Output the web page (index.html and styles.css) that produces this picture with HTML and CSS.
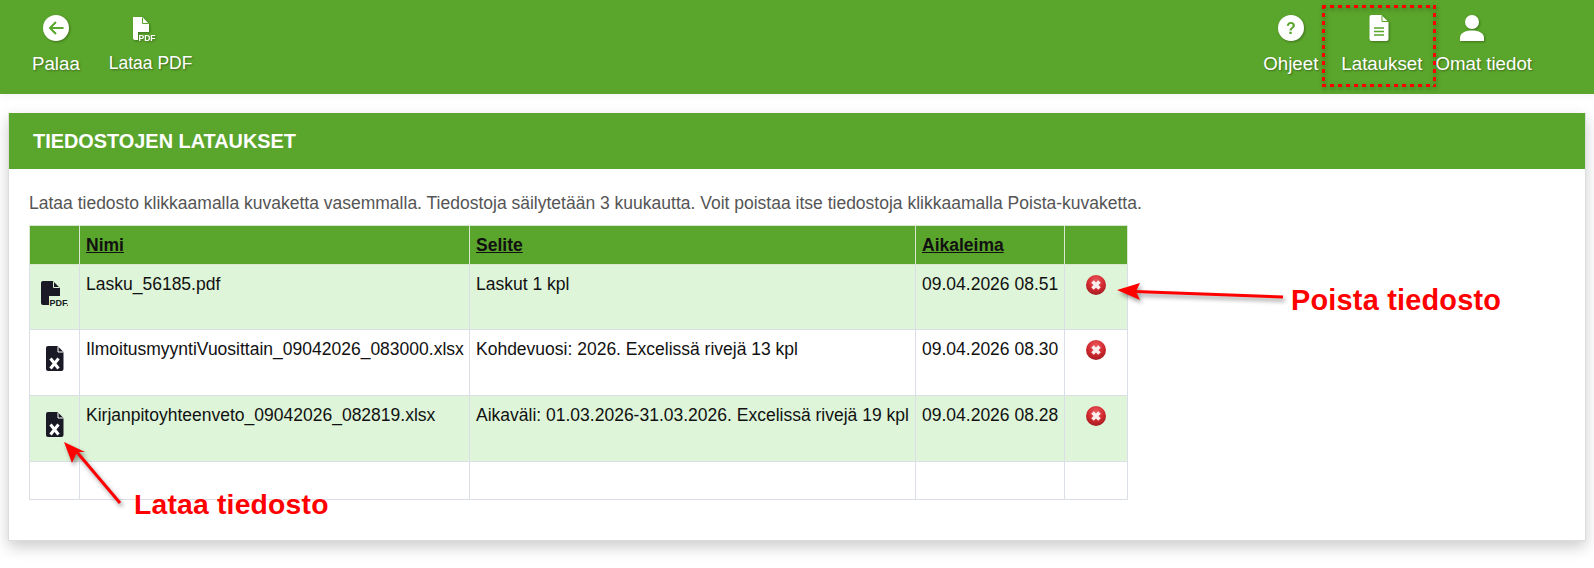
FILE: index.html
```html
<!DOCTYPE html>
<html lang="fi">
<head>
<meta charset="utf-8">
<title>Tiedostojen lataukset</title>
<link rel="stylesheet" href="styles.css">
</head>
<body>
<header class="topbar">
  <nav class="nav-group nav-left">
    <a class="nav-item nav-back">
      <svg class="nav-icon" width="28" height="28" viewBox="0 0 28 28"><circle cx="14" cy="14" r="13" fill="#fff"/><path d="M21.500 14H8.500M14 8l-6 6 6 6" fill="none" stroke="#5aa52b" stroke-width="2"/></svg>
      <span class="nav-label">Palaa</span>
    </a>
    <a class="nav-item nav-pdf">
      <svg class="nav-icon icon-pdf" width="26" height="26" viewBox="0 0 26 26"><path d="M2 1h9.500l6.500 7v8H7v8H4a2 2 0 0 1-2-2z" fill="#fff"/><path d="M11.500 1.500v6h6" fill="none" stroke="#5aa52b" stroke-width="1"/><text x="7.500" y="24.500" class="pdf-mark">PDF</text></svg>
      <span class="nav-label nav-label-sm">Lataa PDF</span>
    </a>
  </nav>
  <nav class="nav-group nav-right">
    <a class="nav-item">
      <svg class="nav-icon" width="28" height="28" viewBox="0 0 28 28"><circle cx="14" cy="14" r="13" fill="#fff"/><text x="14" y="19.500" class="help-mark">?</text></svg>
      <span class="nav-label">Ohjeet</span>
    </a>
    <a class="nav-item nav-marked">
      <svg class="nav-icon icon-doc" width="28" height="28" viewBox="0 0 28 28"><path d="M6.500 1h10l7 7v17a2 2 0 0 1-2 2H6.500a2 2 0 0 1-2-2V3a2 2 0 0 1 2-2z" fill="#fff"/><path d="M17 1.500v6h6" fill="none" stroke="#5aa52b" stroke-width="1"/><path d="M9 14h10M9 17.500h10M9 21h10" stroke="#5aa52b" stroke-width="1.500"/></svg>
      <span class="nav-label">Lataukset</span>
    </a>
    <a class="nav-item">
      <svg class="nav-icon icon-user" width="28" height="28" viewBox="0 0 28 28"><circle cx="14" cy="8" r="7" fill="#fff"/><path d="M2 27v-3c0-5 5-7.500 12-7.500S26 19 26 24v3z" fill="#fff"/></svg>
      <span class="nav-label">Omat tiedot</span>
    </a>
  </nav>
</header>

<main class="panel">
  <h1 class="panel-title">TIEDOSTOJEN LATAUKSET</h1>
  <div class="panel-body">
    <p class="intro">Lataa tiedosto klikkaamalla kuvaketta vasemmalla. Tiedostoja säilytetään 3 kuukautta. Voit poistaa itse tiedostoja klikkaamalla Poista-kuvaketta.</p>
    <table class="files">
      <colgroup>
        <col class="col-icon"><col class="col-name"><col class="col-desc"><col class="col-time"><col class="col-del">
      </colgroup>
      <thead>
        <tr><th></th><th><a>Nimi</a></th><th><a>Selite</a></th><th><a>Aikaleima</a></th><th></th></tr>
      </thead>
      <tbody>
        <tr class="row-alt">
          <td class="cell-icon cell-icon-pdf"><svg width="28" height="27" viewBox="0 0 28 27"><path d="M3 1h10l7 7v8H9v9H3a2 2 0 0 1-2-2V3a2 2 0 0 1 2-2z" fill="#1a1a26"/><path d="M13.500 1.500v6h6" fill="none" stroke="#def5d9" stroke-width="1"/><text x="9.500" y="25.500" class="pdf-file-mark">PDF.</text></svg></td>
          <td>Lasku_56185.pdf</td><td>Laskut 1 kpl</td><td>09.04.2026 08.51</td>
          <td class="cell-del"><svg class="del-icon" width="22" height="22" viewBox="0 0 22 22"><use href="#del"/></svg></td>
        </tr>
        <tr class="row-tall">
          <td class="cell-icon"><svg width="28" height="27" viewBox="0 0 28 27"><use href="#xl"/></svg></td>
          <td>IlmoitusmyyntiVuosittain_09042026_083000.xlsx</td><td>Kohdevuosi: 2026. Excelissä rivejä 13 kpl</td><td>09.04.2026 08.30</td>
          <td class="cell-del"><svg class="del-icon" width="22" height="22" viewBox="0 0 22 22"><use href="#del"/></svg></td>
        </tr>
        <tr class="row-alt row-tall">
          <td class="cell-icon"><svg width="28" height="27" viewBox="0 0 28 27"><use href="#xl"/></svg></td>
          <td>Kirjanpitoyhteenveto_09042026_082819.xlsx</td><td>Aikaväli: 01.03.2026-31.03.2026. Excelissä rivejä 19 kpl</td><td>09.04.2026 08.28</td>
          <td class="cell-del"><svg class="del-icon" width="22" height="22" viewBox="0 0 22 22"><use href="#del"/></svg></td>
        </tr>
        <tr class="row-empty"><td></td><td></td><td></td><td></td><td></td></tr>
      </tbody>
    </table>
  </div>
</main>

<svg class="defs" width="0" height="0">
  <defs>
    <radialGradient id="redball" cx="50%" cy="30%" r="70%">
      <stop offset="0" stop-color="#ec5a5e"/><stop offset="0.6" stop-color="#d0292f"/><stop offset="1" stop-color="#a01c22"/>
    </radialGradient>
    <g id="del">
      <circle cx="11" cy="11" r="10" fill="url(#redball)"/>
      <path d="M7.500 7.500l7 7M14.500 7.500l-7 7" stroke="#fbeeee" stroke-width="3.600"/>
    </g>
    <g id="xl">
      <path d="M7 1h9.500l6 6v17a2 2 0 0 1-2 2H7a2 2 0 0 1-2-2V3a2 2 0 0 1 2-2z" fill="#1a1a26"/>
      <path d="M17 1.500v5.500h5.500" fill="none" stroke="#fff" stroke-width="1"/>
      <path d="M9.500 13.500l8 10M17.500 13.500l-8 10" stroke="#fff" stroke-width="3"/>
    </g>
  </defs>
</svg>

<svg class="arrows" width="1594" height="568" viewBox="0 0 1594 568">
  <g class="arrow">
    <path d="M1283 297L1135 291.500" stroke="#f00" stroke-width="3" fill="none"/>
    <path d="M1117 290L1140 283L1136 291.500L1140 300z" fill="#f00"/>
  </g>
  <g class="arrow">
    <path d="M120 503L76 451" stroke="#f00" stroke-width="3" fill="none"/>
    <path d="M64 442L85 452L77 452L72 463z" fill="#f00"/>
  </g>
</svg>
<span class="note note-delete">Poista tiedosto</span>
<span class="note note-load">Lataa tiedosto</span>
</body>
</html>
```
FILE: styles.css
```css
html, body {
  margin: 0;
  padding: 0;
  background: #fff;
}
body {
  position: relative;
  height: 568px;
  overflow: hidden;
  font-family: "Liberation Sans", Arial, sans-serif;
  color: #111;
}
.topbar {
  height: 94px;
  background: #5aa52b;
  display: flex;
  justify-content: space-between;
  box-shadow: 0 2px 8px rgba(0, 0, 0, 0.05);
}
.nav-group {
  display: flex;
  align-items: flex-start;
}
.nav-left {
  padding-left: 32px;
  gap: 29px;
}
.nav-right {
  padding-right: 62px;
  gap: 13px;
}
.nav-item {
  display: flex;
  flex-direction: column;
  align-items: center;
  padding-top: 14px;
  color: #fff;
}
.nav-icon {
  display: block;
  filter: drop-shadow(1px 1px 1px rgba(0, 0, 0, 0.3));
}
.icon-pdf {
  margin-right: 14px;
  margin-top: 2px;
}
.icon-doc {
  margin-right: 6px;
}
.icon-user {
  margin-right: 23px;
}
.nav-label {
  margin-top: 10px;
  font-size: 18.700px;
  line-height: 24px;
  white-space: nowrap;
  text-shadow: 1px 1px 2px rgba(0, 0, 0, 0.35);
}
.nav-label-sm {
  margin-top: 9px;
  font-size: 17.500px;
}
.nav-marked {
  position: relative;
  margin-left: 10px;
}
.nav-marked::after {
  content: "";
  position: absolute;
  left: -19px;
  right: -14px;
  top: 5px;
  height: 82px;
  background:
    repeating-linear-gradient(90deg, #f00 0 4px, transparent 4px 8px) top left / 100% 3px no-repeat,
    repeating-linear-gradient(90deg, #f00 0 4px, transparent 4px 8px) bottom left / 100% 3px no-repeat,
    repeating-linear-gradient(180deg, #f00 0 4px, transparent 4px 8px) top left / 3px 100% no-repeat,
    repeating-linear-gradient(180deg, #f00 0 4px, transparent 4px 8px) top right / 3px 100% no-repeat;
  filter: drop-shadow(1px 2px 2px rgba(0, 0, 0, 0.35));
}
.pdf-mark {
  font-family: "Liberation Sans", Arial, sans-serif;
  font-size: 8.500px;
  font-weight: 700;
  fill: #fff;
}
.help-mark {
  font-family: "Liberation Sans", Arial, sans-serif;
  font-size: 16px;
  font-weight: 700;
  fill: #5aa52b;
  text-anchor: middle;
}
.pdf-file-mark {
  font-family: "Liberation Sans", Arial, sans-serif;
  font-size: 9px;
  font-weight: 700;
  fill: #1a1a26;
}
.panel {
  margin: 19px 8px 0;
  height: 428px;
  border: 1px solid #ddd;
  border-top: 0;
  box-sizing: border-box;
  box-shadow: 0 6px 14px rgba(0, 0, 0, 0.2);
  background: #fff;
}
.panel-title {
  margin: 0;
  height: 56px;
  padding-left: 24px;
  background: #5aa52b;
  color: #fff;
  font-size: 19.900px;
  font-weight: 700;
  line-height: 56px;
}
.panel-body {
  padding: 24px 0 0 20px;
}
.intro {
  margin: 0 0 12px;
  font-size: 17.500px;
  line-height: 20px;
  color: #555;
}
.files {
  width: 1098px;
  table-layout: fixed;
  border-collapse: collapse;
  font-size: 17.500px;
  line-height: 20px;
  color: #111;
}
.col-icon { width: 50px; }
.col-name { width: 390px; }
.col-desc { width: 446px; }
.col-time { width: 149px; }
.col-del { width: 63px; }
.files th, .files td {
  border: 1px solid #d9dfe5;
  padding: 9px 6px;
  vertical-align: top;
  text-align: left;
  white-space: nowrap;
  overflow: visible;
}
.files thead tr {
  height: 39px;
  background: #5aa52b;
}
.files th {
  padding: 9px 6px;
  font-weight: 700;
  font-size: 17.500px;
  border-color: #d9e6d0;
}
.files th a {
  color: #111;
  text-decoration: underline;
}
.files tbody tr {
  height: 65px;
}
.files tbody .row-tall {
  height: 66px;
}
.files tbody .row-empty {
  height: 38px;
}
.row-alt {
  background: #def5d9;
}
.files .cell-icon {
  padding: 15px 0 0 11px;
}
.files .cell-icon-pdf {
  padding-left: 10px;
}
.files .cell-icon svg {
  display: block;
}
.files .cell-del {
  padding: 9px 0 0 20px;
}
.del-icon {
  display: block;
}
.defs {
  position: absolute;
}
.arrows {
  position: absolute;
  left: 0;
  top: 0;
  pointer-events: none;
}
.arrow {
  filter: drop-shadow(2px 3px 2px rgba(0, 0, 0, 0.4));
}
.note {
  position: absolute;
  color: #f00;
  font-weight: 700;
  line-height: 32px;
  white-space: nowrap;
  letter-spacing: 0.2px;
  text-shadow: 0 0 2px #fff;
}
.note-delete {
  left: 1291px;
  top: 284px;
  font-size: 28.900px;
}
.note-load {
  left: 134px;
  top: 488px;
  font-size: 28.300px;
}
```
